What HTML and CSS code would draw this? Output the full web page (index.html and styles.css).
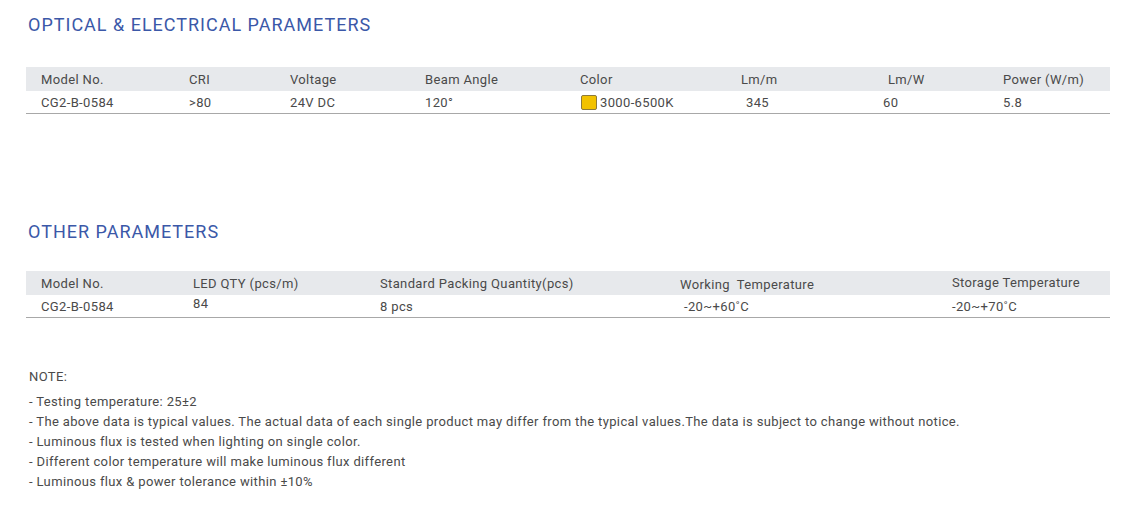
FILE: index.html
```html
<!DOCTYPE html>
<html lang="en">
<head>
<meta charset="utf-8">
<title>Parameters</title>
<link rel="stylesheet" href="styles.css">
</head>
<body>
<section class="section s1">
  <h2 class="title">OPTICAL &amp; ELECTRICAL PARAMETERS</h2>
  <div class="tbl t1">
    <div class="row head">
      <div>Model No.</div><div>CRI</div><div>Voltage</div><div>Beam Angle</div><div>Color</div><div>Lm/m</div><div>Lm/W</div><div>Power (W/m)</div>
    </div>
    <div class="row data">
      <div>CG2-B-0584</div><div>&gt;80</div><div>24V DC</div><div>120°</div><div class="color"><span class="swatch"></span>3000-6500K</div><div class="r5">345</div><div class="l5">60</div><div>5.8</div>
    </div>
  </div>
</section>
<section class="section s2">
  <h2 class="title">OTHER PARAMETERS</h2>
  <div class="tbl t2">
    <div class="row head">
      <div>Model No.</div><div>LED QTY (pcs/m)</div><div>Standard Packing Quantity(pcs)</div><div class="d2">Working&nbsp; Temperature</div><div class="u2">Storage Temperature</div>
    </div>
    <div class="row data">
      <div>CG2-B-0584</div><div class="u3">84</div><div>8 pcs</div><div class="r4">-20~+60˚C</div><div>-20~+70˚C</div>
    </div>
  </div>
</section>
<section class="note">
  <p class="note-title">NOTE:</p>
  <ul>
    <li>- Testing temperature: 25±2</li>
    <li>- The above data is typical values. The actual data of each single product may differ from the typical values.The data is subject to change without notice.</li>
    <li>- Luminous flux is tested when lighting on single color.</li>
    <li>- Different color temperature will make luminous flux different</li>
    <li>- Luminous flux &amp; power tolerance within ±10%</li>
  </ul>
</section>
</body>
</html>
```
FILE: styles.css
```css
html, body {
  margin: 0;
  padding: 0;
  background: #ffffff;
}
body {
  width: 1130px;
  height: 510px;
  overflow: hidden;
  font-family: Roboto, "Liberation Sans", sans-serif;
  font-size: 13px;
  letter-spacing: 0.36px;
  color: #4a4a4a;
  padding: 0 20px 0 26px;
  box-sizing: border-box;
}
.title {
  margin: 0 0 0 2px;
  font-weight: 400;
  font-size: 18px;
  line-height: 24px;
  color: #3b58a8;
  letter-spacing: 1px;
}
.s1 { padding-top: 13px; }
.s1 .title { margin-bottom: 30px; }
.s2 { padding-top: 106px; }
.s2 .title { margin-bottom: 27px; }
.tbl { width: 1084px; }
.row { display: grid; align-items: center; }
.row > div { white-space: nowrap; }
.row > div:first-child { padding-left: 15px; }
.head { background: #e7e9ec; height: 24px; }
.data { height: 22px; border-bottom: 1px solid #a8a8a8; }
.t1 .row { grid-template-columns: 163px 101px 135px 155px 161px 147px 115px 1fr; }
.t2 .row { grid-template-columns: 167px 187px 300px 272px 1fr; }
.color { display: flex; align-items: center; }
.swatch {
  display: inline-block;
  width: 14px;
  height: 13px;
  background: #f2c200;
  border: 1px solid #8c7a3c;
  border-radius: 2px;
  margin-right: 3px;
  margin-left: 1px;
}
.r5 { padding-left: 5px; }
.l5 { margin-left: -5px; }
.r4 { padding-left: 4px; }
.d2 { position: relative; top: 1px; }
.u2 { position: relative; top: -1px; }
.u3 { position: relative; top: -3px; }
.note { padding-top: 49px; padding-left: 3px; }
.note-title { margin: 0 0 5px; line-height: 20px; }
.note ul { list-style: none; margin: 0; padding: 0; }
.note li { line-height: 20px; }
```
